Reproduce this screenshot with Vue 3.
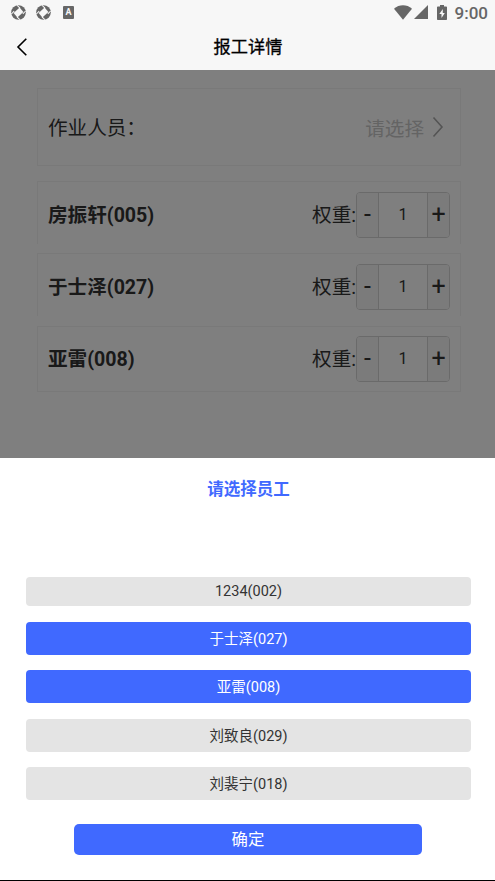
<template>
  <div class="page">
    <header class="top">
      <div class="status-bar">
        <div class="status-left">
          <svg v-for="n in 2" :key="n" class="sync-icon" viewBox="0 0 16 16">
            <circle cx="8" cy="8" r="7.8" fill="#666" />
            <path d="M9.2 2.6L13.2 7.4l-6.4 6L2.8 8.6z" fill="#f7f7f7" />
            <path d="M6.6 .4l3 3M15.6 6.4l-3 3M9.4 15.6l-3-3M.4 9.6l3-3" stroke="#f7f7f7" stroke-width="1.1" />
          </svg>
          <span class="input-icon">A</span>
        </div>
        <div class="status-right">
          <svg class="wifi" viewBox="0 0 18 15">
            <path d="M0 3.8C5.2-.8 12.8-.8 18 3.8L9 14.8z" fill="#666" />
          </svg>
          <svg class="signal" viewBox="0 0 14 14">
            <path d="M14 0v14H0z" fill="#666" />
          </svg>
          <svg class="battery" viewBox="0 0 10 15">
            <path d="M3 0h4v1.5h2.2q.8 0 .8.8v11.9q0 .8-.8.8H.8q-.8 0-.8-.8V2.3q0-.8.8-.8H3z" fill="#666" />
            <path d="M5.8 4L2.3 9h2.2v4l3.3-5H5.8z" fill="#f7f7f7" />
          </svg>
          <span class="time">9:00</span>
        </div>
      </div>
      <div class="nav-bar">
        <svg class="back" viewBox="0 0 12 20" @click="goBack">
          <path d="M10.3 1.7L2 10l8.3 8.3" fill="none" stroke="#000" stroke-width="1.6" />
        </svg>
        <h1 class="nav-title">报工详情</h1>
      </div>
    </header>

    <main class="content">
      <div class="picker-row" @click="showPopup = true">
        <span>作业人员：</span>
        <span class="placeholder">
          请选择
          <svg class="arrow" viewBox="0 0 12 22">
            <path d="M1.5 1.5L10 11l-8.5 9.5" fill="none" stroke="#a8a8a8" stroke-width="1.6" />
          </svg>
        </span>
      </div>

      <div v-for="worker in workers" :key="worker.code" class="worker-row">
        <span class="worker-name">{{ worker.name }}({{ worker.code }})</span>
        <div class="weight">
          <span class="weight-label">权重:</span>
          <div class="stepper">
            <button class="step-btn minus" @click="changeWeight(worker, -1)">-</button>
            <span class="step-value">{{ worker.weight }}</span>
            <button class="step-btn plus" @click="changeWeight(worker, 1)">+</button>
          </div>
        </div>
      </div>
      <div v-if="showPopup" class="mask" @click="showPopup = false"></div>
    </main>

    <section v-if="showPopup" class="popup">
      <h2 class="popup-title">请选择员工</h2>
      <div class="option-list">
        <div
          v-for="item in staff"
          :key="item.code"
          class="option"
          :class="{ active: isSelected(item.code), short: item.code === '002' }"
          @click="toggleStaff(item)"
        >
          {{ item.name }}({{ item.code }})
        </div>
      </div>
      <button class="confirm-btn" @click="showPopup = false">确定</button>
    </section>
  </div>
</template>

<script setup>
import { ref } from 'vue'

const showPopup = ref(true)

const workers = ref([
  { name: '房振轩', code: '005', weight: 1 },
  { name: '于士泽', code: '027', weight: 1 },
  { name: '亚雷', code: '008', weight: 1 }
])

const staff = ref([
  { name: '1234', code: '002' },
  { name: '于士泽', code: '027' },
  { name: '亚雷', code: '008' },
  { name: '刘致良', code: '029' },
  { name: '刘裴宁', code: '018' }
])

const isSelected = (code) => workers.value.some((w) => w.code === code)

const toggleStaff = (item) => {
  if (isSelected(item.code)) {
    workers.value = workers.value.filter((w) => w.code !== item.code)
  } else {
    workers.value.push({ ...item, weight: 1 })
  }
}

const changeWeight = (worker, step) => {
  worker.weight = Math.max(1, worker.weight + step)
}

const goBack = () => window.history.back()
</script>

<style>
body {
  margin: 0;
  background: #fff;
}
</style>

<style scoped>
.page {
  display: flex;
  flex-direction: column;
  box-sizing: border-box;
  height: 881px;
  overflow: hidden;
  border-bottom: 1px solid #000;
  font-family: Roboto, "Noto Sans CJK SC", sans-serif;
  color: #333;
}

button {
  padding: 0;
  border: none;
  font-family: inherit;
}

/* 顶部 */
.top {
  height: 70px;
  flex-shrink: 0;
  background: #f7f7f7;
}

.status-bar {
  display: flex;
  justify-content: space-between;
  height: 24px;
  padding: 0 7px 0 11px;
}

.status-left,
.status-right {
  display: flex;
  align-items: center;
}

.sync-icon {
  width: 15px;
  height: 15px;
  margin-right: 10px;
}

.input-icon {
  width: 11px;
  height: 13px;
  margin-left: 2px;
  border-radius: 1px;
  background: #666;
  color: #f7f7f7;
  font-size: 9px;
  font-weight: 700;
  line-height: 13px;
  text-align: center;
}

.wifi { width: 18px; height: 15px; }
.signal { width: 14px; height: 14px; margin-left: 2px; }
.battery { width: 10px; height: 15px; margin: 0 8px 0 9px; }

.time {
  color: #666;
  font-size: 17px;
  font-weight: 500;
  line-height: 26px;
  padding-top: 1px;
}

.nav-bar {
  display: grid;
  grid-template-columns: 40px 1fr 40px;
  align-items: center;
  height: 46px;
}

.back {
  width: 12px;
  height: 20px;
  margin-left: 16px;
}

.nav-title {
  margin: 0;
  padding: 0 0 3px 1px;
  color: #000;
  font-size: 17.2px;
  font-weight: 400;
  -webkit-text-stroke: 0.3px #000;
  text-align: center;
}

/* 作业人员 */
.content {
  position: relative;
  box-sizing: border-box;
  height: 388px;
  flex-shrink: 0;
  padding: 18px 34px 0 37px;
  font-size: 19.6px;
}

.mask {
  position: absolute;
  inset: 0;
  background: rgba(0, 0, 0, 0.5);
}

.picker-row,
.worker-row {
  display: flex;
  align-items: center;
  justify-content: space-between;
  box-sizing: border-box;
  border: 1px solid #f3f3f3;
}

.picker-row {
  height: 78px;
  margin-bottom: 15px;
  padding: 0 16px 2px 10px;
}

.placeholder {
  display: flex;
  align-items: center;
  gap: 8px;
  padding-top: 2px;
  color: #c8c8c8;
}

.arrow {
  width: 12px;
  height: 22px;
}

.worker-row {
  height: 63px;
  margin-bottom: 9.3px;
  padding: 3px 10px 0;
  border-bottom: none;
}

.worker-row:nth-child(4) {
  height: 66px;
  padding-bottom: 3px;
  border-bottom: 1px solid #f3f3f3;
}

.worker-name,
.weight-label {
  padding-bottom: 2px;
}

.worker-name {
  font-weight: 700;
}

.weight {
  display: flex;
  align-items: center;
}

.stepper {
  display: flex;
  box-sizing: border-box;
  width: 94px;
  height: 46px;
  overflow: hidden;
  border: 1px solid #d4d4d4;
  border-radius: 4px;
}

.step-btn {
  width: 22px;
  background: #f7f7f7;
  color: #333;
  font-size: 25px;
  line-height: 40px;
}

.minus { border-right: 1px solid #d4d4d4; }
.plus { border-left: 1px solid #d4d4d4; }

.step-value {
  flex: 1;
  font-size: 16px;
  line-height: 44px;
  text-align: center;
}

/* 员工弹窗 */
.popup {
  display: flex;
  flex-direction: column;
  flex: 1;
  background: #fff;
}

.popup-title {
  height: 24px;
  margin: 20px 0 75px;
  padding-left: 2px;
  color: #4069ff;
  font-size: 16.5px;
  font-weight: 700;
  line-height: 24px;
  text-align: center;
}

.option-list {
  display: flex;
  flex-direction: column;
  gap: 15.5px;
  padding: 0 24px 0 26px;
}

.option {
  height: 33px;
  border-radius: 4px;
  background: #e4e4e4;
  font-size: 14.5px;
  line-height: 35px;
  text-align: center;
}

.option.short {
  height: 29px;
  line-height: 29px;
}

.option.active {
  background: #4069ff;
  color: #fff;
}

.confirm-btn {
  width: 348px;
  height: 31px;
  margin: 24px 0 0 74px;
  border-radius: 5px;
  background: #4069ff;
  color: #fff;
  font-size: 16.4px;
  line-height: 31px;
}
</style>
